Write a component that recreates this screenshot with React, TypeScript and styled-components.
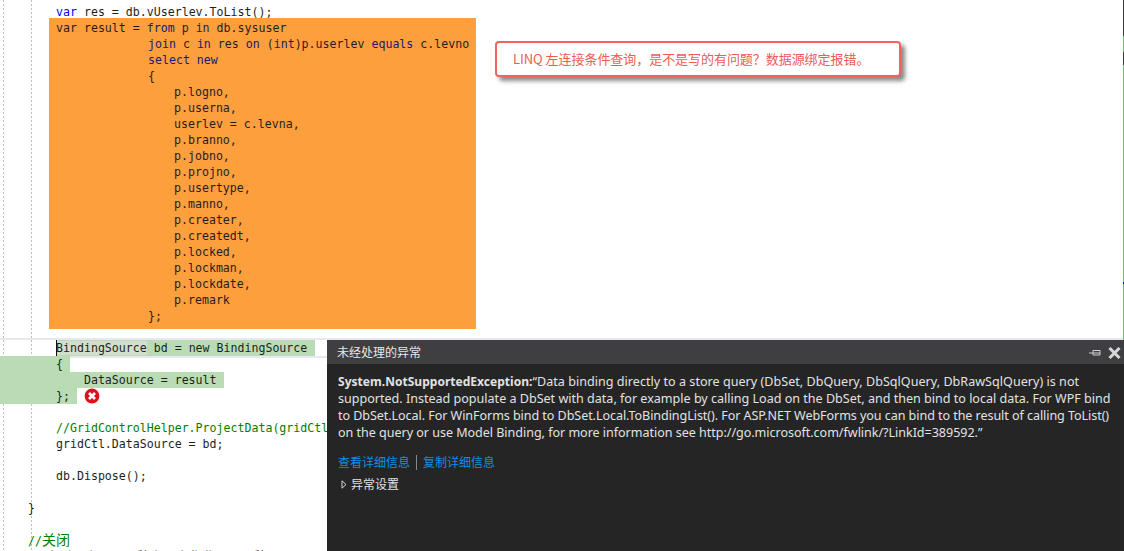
import React from "react";
import styled, { createGlobalStyle } from "styled-components";

const GlobalStyle = createGlobalStyle`
  html, body {
    margin: 0;
    padding: 0;
    background: #fff;
  }
`;

const Page = styled.div`
  position: relative;
  width: 1124px;
  height: 551px;
  overflow: hidden;
  background: #fff;
  background-image:
    repeating-linear-gradient(#bdbdbd 0 2px, transparent 2px 4px),
    repeating-linear-gradient(#bdbdbd 0 2px, transparent 2px 4px);
  background-size: 1px 100%, 1px 100%;
  background-position: 3px 0, 31px 0;
  background-repeat: no-repeat;
`;

const Code = styled.div`
  display: flex;
  flex-direction: column;
  padding-top: 4px;
  font-family: "DejaVu Sans Mono", "Noto Sans CJK SC", monospace;
  font-size: 11.6px;
  color: #1e1e1e;
`;

const Line = styled.div<{ $indent?: number }>`
  position: relative;
  height: 16px;
  line-height: 16px;
  white-space: pre;
  padding-left: ${(p) => p.$indent ?? 0}px;
  display: flex;
  align-items: center;
`;

const OrangeBlock = styled.div`
  margin-left: 49px;
  width: 427px;
  height: 311px;
  padding: 2px 0 0 7px;
  box-sizing: border-box;
  margin-top: -2px;
  margin-bottom: 11px;
  background: #fe9f3e;
`;

const Green = styled.span`
  background: #b9dcb5;
  height: 16px;
`;

const WideGreen = styled(Green)`
  margin-left: -56px;
  padding-left: 56px;
`;

const Faded = styled.span`
  background: #d3dfcb;
`;

const BindingRow = styled(Green)`
  padding-right: 1px;
`;

const CurrentLine = styled(Line)`
  border-top: 2px solid #e8e8f4;
  border-bottom: 2px solid #e8e8f4;
  margin: -2px 0;
  height: 16px;
  box-sizing: content-box;
`;

const Caret = styled.span`
  position: absolute;
  left: 56px;
  top: 0;
  width: 1px;
  height: 16px;
  background: #111;
`;

const Keyword = styled.span`
  color: #0000ff;
`;

const Linq = styled.span`
  color: #12206e;
`;

const Comment = styled.span`
  color: #008000;
`;

const CommentCjk = styled.span`
  font-family: "Noto Sans CJK SC", sans-serif;
  font-size: 14px;
`;

const ClippedLine = styled(Line)`
  font-family: "Noto Sans CJK SC", sans-serif;
  font-size: 13px;
  color: #555;
`;

const ErrorIcon = styled.svg`
  margin-left: 7px;
  flex: none;
`;

const Callout = styled.div`
  position: absolute;
  left: 495px;
  top: 41px;
  width: 406px;
  height: 36px;
  box-sizing: border-box;
  padding: 0 0 1px 16px;
  display: flex;
  align-items: center;
  background: #fff;
  border: 2px solid #f4625e;
  border-radius: 4px;
  box-shadow: 4px 4px 4px #8a8a8a;
  color: #ee5a56;
  font-family: "Noto Sans CJK SC", "Liberation Sans", sans-serif;
  font-size: 13px;
  letter-spacing: -0.05px;
`;

const ScrollMarks = styled.div`
  position: absolute;
  right: 0;
  top: 0;
  width: 1px;
  height: 340px;
  display: flex;
  flex-direction: column;
`;

const Mark = styled.div<{ $h: number; $color: string }>`
  height: ${(p) => p.$h}px;
  background: ${(p) => p.$color};
`;

const Dialog = styled.div`
  position: absolute;
  left: 327px;
  top: 340px;
  width: 797px;
  height: 211px;
  background: #252526;
  color: #e2e2e2;
  font-family: "Noto Sans", "Noto Sans CJK SC", sans-serif;
`;

const TitleBar = styled.div`
  height: 24px;
  box-sizing: border-box;
  padding: 0 3px 2px 10px;
  background: #3f3f41;
  display: flex;
  align-items: center;
  justify-content: space-between;
  font-family: "Noto Sans CJK SC", sans-serif;
  font-size: 12px;
  color: #e8e8e8;
`;

const TitleActions = styled.div`
  display: flex;
  align-items: center;
  gap: 7px;
  margin-top: 3px;
`;

const Body = styled.div`
  padding: 9px 0 0 11px;
`;

const MessageLine = styled.div<{ $spacing?: number }>`
  font-size: 12.56px;
  line-height: 17px;
  white-space: pre;
  letter-spacing: ${(p) => p.$spacing ?? 0}px;
`;

const Strong = styled.b`
  font-size: 12px;
  font-weight: 700;
`;

const Links = styled.div`
  margin-top: 13px;
  display: flex;
  align-items: center;
  font-family: "Noto Sans CJK SC", sans-serif;
  font-size: 12px;
  line-height: 16px;
  color: #0e8fe8;
`;

const Divider = styled.span`
  width: 1px;
  height: 15px;
  margin: 0 6px;
  background: #8a8a8a;
`;

const Settings = styled.div`
  margin-top: 6px;
  margin-left: 3px;
  display: flex;
  align-items: center;
  gap: 4px;
  font-family: "Noto Sans CJK SC", sans-serif;
  font-size: 12px;
  line-height: 16px;
`;

const fields = [
  "p.logno,",
  "p.userna,",
  "userlev = c.levna,",
  "p.branno,",
  "p.jobno,",
  "p.projno,",
  "p.usertype,",
  "p.manno,",
  "p.creater,",
  "p.createdt,",
  "p.locked,",
  "p.lockman,",
  "p.lockdate,",
  "p.remark",
];

const App: React.FC = () => {
  return (
    <Page>
      <GlobalStyle />
      <Code>
        <Line $indent={56}>
          <Keyword>var</Keyword> res = db.vUserlev.ToList();
        </Line>
        <OrangeBlock>
          <Line>
            var result = <Linq>from</Linq> p <Linq>in</Linq> db.sysuser
          </Line>
          <Line $indent={92}>
            <Linq>join</Linq> c <Linq>in</Linq> res <Linq>on</Linq> (<Linq>int</Linq>)p.userlev{" "}
            <Linq>equals</Linq> c.levno
          </Line>
          <Line $indent={92}>
            <Linq>select new</Linq>
          </Line>
          <Line $indent={92}>{"{"}</Line>
          {fields.map((f) => (
            <Line key={f} $indent={118}>
              {f}
            </Line>
          ))}
          <Line $indent={92}>{"};"}</Line>
        </OrangeBlock>
        <CurrentLine $indent={56}>
          <BindingRow>
            <Faded>BindingSource</Faded> bd = new BindingSource{" "}
          </BindingRow>
          <Caret />
        </CurrentLine>
        <Line $indent={56}>
          <WideGreen>{"{ "}</WideGreen>
        </Line>
        <Line $indent={56}>
          <WideGreen>{"    DataSource = result "}</WideGreen>
        </Line>
        <Line $indent={56}>
          <WideGreen>{"}; "}</WideGreen>
          <ErrorIcon width="16" height="16" viewBox="0 0 16 16">
            <circle cx="8" cy="8" r="7.4" fill="#dc1119" />
            <path d="M5 5l6 6M11 5l-6 6" stroke="#fff" strokeWidth="2.8" />
          </ErrorIcon>
        </Line>
        <Line />
        <Line $indent={56}>
          <Comment>//GridControlHelper.ProjectData(gridCtl</Comment>
        </Line>
        <Line $indent={56}>gridCtl.DataSource = bd;</Line>
        <Line />
        <Line $indent={56}>db.Dispose();</Line>
        <Line />
        <Line $indent={28}>{"}"}</Line>
        <Line />
        <Line $indent={28}>
          <Comment>
            //<CommentCjk>关闭</CommentCjk>
          </Comment>
        </Line>
        <ClippedLine $indent={46}>上引导上，项目移上，上作业，项目移</ClippedLine>
      </Code>
      <Callout>LINQ 左连接条件查询，是不是写的有问题？数据源绑定报错。</Callout>
      <ScrollMarks>
        <Mark $h={36} $color="#3a3a3a" />
        <Mark $h={16} $color="#6cc06c" />
        <Mark $h={13} $color="#3a3a3a" />
        <Mark $h={217} $color="#6cc06c" />
        <Mark $h={2} $color="#0000e0" />
        <Mark $h={56} $color="#6cc06c" />
      </ScrollMarks>
      <Dialog>
        <TitleBar>
          未经处理的异常
          <TitleActions>
            <svg width="12" height="10" viewBox="0 0 12 10">
              <path d="M0 5h4M4 2.5h7v4.5H4z" stroke="#d0d0d0" fill="none" />
              <path d="M4 5h7" stroke="#d0d0d0" />
            </svg>
            <svg width="13" height="12" viewBox="0 0 13 12">
              <path d="M1.5 1l10 10M11.5 1l-10 10" stroke="#d8d8d8" strokeWidth="3" />
            </svg>
          </TitleActions>
        </TitleBar>
        <Body>
          <MessageLine $spacing={0.03}>
            <Strong>System.NotSupportedException:</Strong>
            “Data binding directly to a store query (DbSet, DbQuery, DbSqlQuery, DbRawSqlQuery) is not
          </MessageLine>
          <MessageLine>
            supported. Instead populate a DbSet with data, for example by calling Load on the DbSet, and then bind to local data. For WPF bind
          </MessageLine>
          <MessageLine $spacing={-0.06}>
            to DbSet.Local. For WinForms bind to DbSet.Local.ToBindingList(). For ASP.NET WebForms you can bind to the result of calling ToList()
          </MessageLine>
          <MessageLine $spacing={-0.03}>
            on the query or use Model Binding, for more information see http://go.microsoft.com/fwlink/?LinkId=389592.”
          </MessageLine>
          <Links>
            查看详细信息
            <Divider />
            复制详细信息
          </Links>
          <Settings>
            <svg width="6" height="9" viewBox="0 0 6 9">
              <path d="M1 .8l4 3.7-4 3.7z" fill="none" stroke="#d8d8d8" />
            </svg>
            异常设置
          </Settings>
        </Body>
      </Dialog>
    </Page>
  );
};

export default App;
